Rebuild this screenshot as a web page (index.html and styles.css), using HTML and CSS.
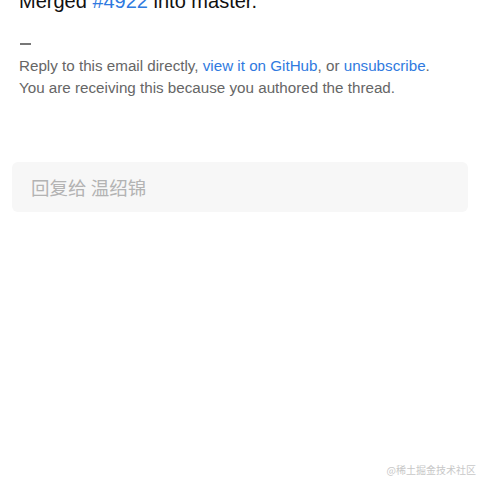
FILE: index.html
```html
<!DOCTYPE html>
<html>
    <head>
        <meta charset="utf-8">
        <title>Reply</title>
        <link rel="stylesheet" href="styles.css">
    </head>
    <body>
        <div class="mail">
            <p class="merged">Merged <a href="#">#4922</a> into master.</p>
            <div class="dash"></div>
            <p class="footer">
                Reply to this email directly, <a href="#">view it on GitHub</a>, or <a href="#">unsubscribe</a>.<br>
                You are receiving this because you authored the thread.
            </p>
        </div>
        <div class="reply">
            <input class="reply-input" type="text" placeholder="回复给 温绍锦">
        </div>
        <div class="watermark">@稀土掘金技术社区</div>
    </body>
</html>
```

FILE: styles.css
```css
html, body {
margin: 0;
padding: 0;
height: 100%;
background: #fff;
font-family: "Liberation Sans", "Noto Sans CJK SC", sans-serif;
}
a {
color: #2f7ae0;
text-decoration: none;
}
.mail {
padding: 0 19px;
margin-top: -12px;
}
.merged {
margin: 0;
font-size: 20px;
line-height: 26px;
color: #111;
}
.dash {
width: 11px;
height: 1.5px;
background: #777;
margin: 29px 0 0 1px;
}
.footer {
margin: 10px 0 0 0;
font-size: 15.2px;
line-height: 22px;
color: #666;
}
.reply {
padding: 0 12px;
margin-top: 63px;
}
.reply-input {
display: block;
width: 100%;
height: 50px;
box-sizing: border-box;
border: none;
border-radius: 6px;
background: #f7f7f7;
padding: 0 19px;
font-size: 18.5px;
font-family: "Noto Sans CJK SC", sans-serif;
outline: none;
}
.reply-input::placeholder {
color: #b3b3b3;
}
.watermark {
position: absolute;
right: 4px;
top: 462px;
font-size: 10px;
color: #c8c8c8;
font-family: "Noto Sans CJK SC", serif;
}
```
